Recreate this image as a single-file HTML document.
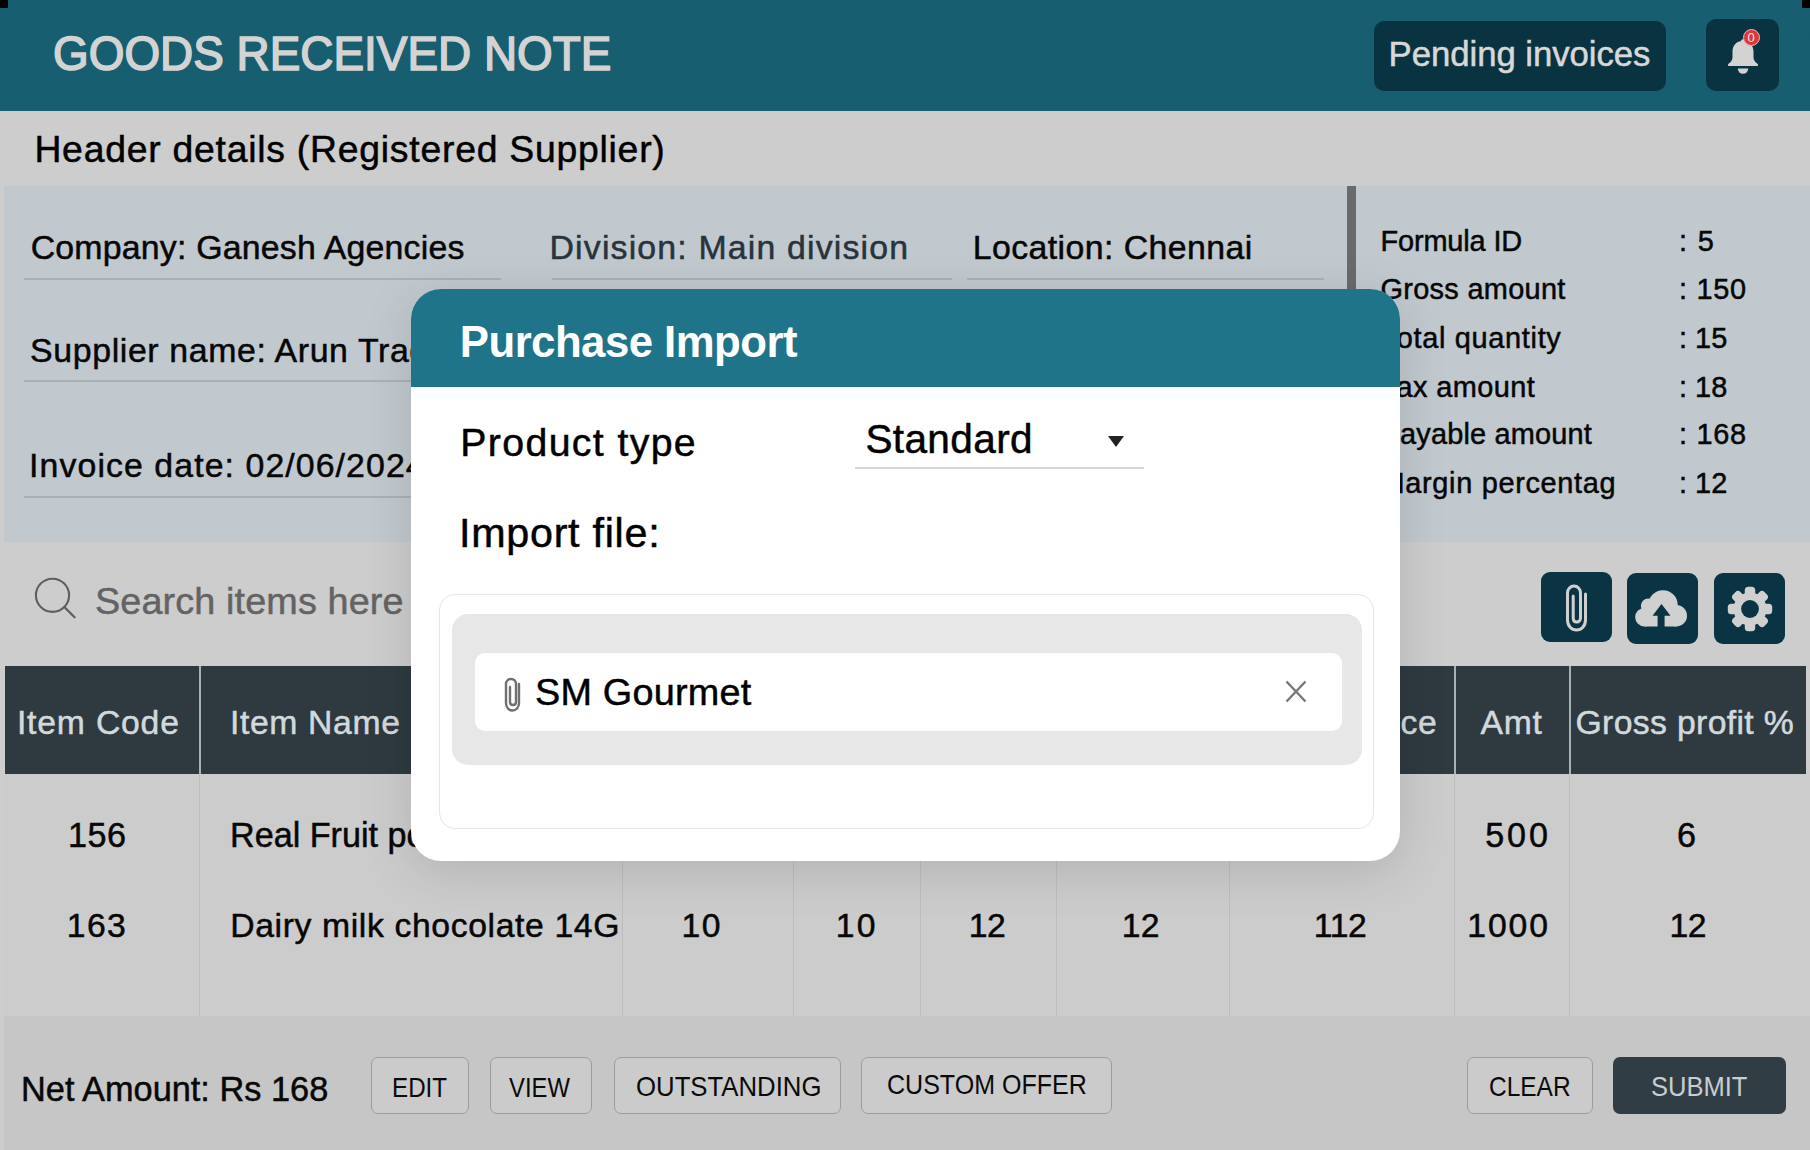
<!DOCTYPE html>
<html><head><meta charset="utf-8">
<style>
*{margin:0;padding:0;box-sizing:border-box}
html,body{width:1810px;height:1150px;overflow:hidden;background:#cdcdcd;font-family:"Liberation Sans",sans-serif}
.a{position:absolute}
.t{position:absolute;white-space:nowrap;line-height:1}
svg{position:absolute;overflow:visible}
</style></head><body>
<!-- top bar -->
<div class="a" style="left:0;top:0;width:1810px;height:111px;background:#175e70"></div>
<div class="a" style="left:0;top:0;width:8px;height:8px;background:#000"></div>
<div class="a" style="left:1802px;top:0;width:8px;height:8px;background:#000"></div>
<div class="a" style="left:0;top:0;width:40px;height:40px;background:#175e70;border-top-left-radius:36px"></div>
<div class="a" style="left:1770px;top:0;width:40px;height:40px;background:#175e70;border-top-right-radius:36px"></div>
<div class="t" id="title" style="left:52.92px;top:29.40px;font-size:48.84px;letter-spacing:0.000px;-webkit-text-stroke:1.6px #d3d3d3;color:#d3d3d3;transform:scaleX(0.9397);transform-origin:0 0;">GOODS RECEIVED NOTE</div>
<div class="a" style="left:1374px;top:21px;width:292px;height:70px;background:#0a3342;border-radius:10px"></div>
<div class="t" id="pend" style="left:1388.60px;top:37.30px;font-size:34.74px;letter-spacing:-0.053px;-webkit-text-stroke:0.5px #d8d8d8;color:#d8d8d8;">Pending invoices</div>
<div class="a" style="left:1706px;top:19px;width:73px;height:72px;background:#0a3342;border-radius:10px"></div>
<svg style="left:1726px;top:38px" width="34" height="38" viewBox="0 0 34 38">
  <path d="M17 3 C 10 3 6.5 8 6.5 13.5 L 6.5 19.5 C 6.5 22.5 4.5 24.5 2.2 26 Q 1.2 28 3.5 28 L 30.5 28 Q 32.8 28 31.8 26 C 29.5 24.5 27.5 22.5 27.5 19.5 L 27.5 13.5 C 27.5 8 24 3 17 3 Z" fill="#d3d3d3"/>
  <path d="M11.8 30.5 A 5.2 5.2 0 0 0 22.2 30.5 Z" fill="#d3d3d3"/>
  <circle cx="17" cy="3.5" r="2.2" fill="#d3d3d3"/>
</svg>
<div class="a" style="left:1743px;top:29px;width:17px;height:17px;border-radius:50%;background:#d83a3a;border:1.5px solid #f1b5b5"></div>
<div class="t" style="left:1747.5px;top:31px;font-size:13px;color:#fbe3e3">0</div>

<!-- header details -->
<div class="t" id="hd" style="left:34.40px;top:130.60px;font-size:37.35px;letter-spacing:0.760px;-webkit-text-stroke:0.5px #000;color:#000;">Header details (Registered Supplier)</div>
<div class="a" style="left:4px;top:186px;width:1806px;height:356px;background:#c1c9cf"></div>
<div class="a" style="left:1347px;top:186px;width:9px;height:356px;background:#6a6a6c"></div>
<div class="t" id="comp" style="left:30.70px;top:231.30px;font-size:33.87px;letter-spacing:0.200px;-webkit-text-stroke:0.5px #070707;color:#070707;">Company: Ganesh Agencies</div>
<div class="a" style="left:24px;top:278px;width:477px;height:2px;background:#a9b1b7"></div>
<div class="t" id="div" style="left:549.50px;top:231.30px;font-size:33.87px;letter-spacing:1.159px;-webkit-text-stroke:0.5px #28343b;color:#28343b;">Division: Main division</div>
<div class="a" style="left:552px;top:278px;width:400px;height:2px;background:#a9b1b7"></div>
<div class="t" id="loc" style="left:972.70px;top:231.30px;font-size:33.87px;letter-spacing:0.419px;-webkit-text-stroke:0.5px #070707;color:#070707;">Location: Chennai</div>
<div class="a" style="left:967px;top:278px;width:357px;height:2px;background:#a9b1b7"></div>
<div class="t" id="sup" style="left:30.10px;top:333.90px;font-size:33.87px;letter-spacing:0.614px;-webkit-text-stroke:0.5px #070707;color:#070707;">Supplier name: Arun Traders</div>
<div class="a" style="left:24px;top:380px;width:477px;height:2px;background:#a9b1b7"></div>
<div class="t" id="inv" style="left:29.10px;top:449.40px;font-size:33.87px;letter-spacing:1.073px;-webkit-text-stroke:0.5px #070707;color:#070707;">Invoice date: 02/06/2024</div>
<div class="a" style="left:24px;top:496px;width:477px;height:2px;background:#a9b1b7"></div>
<div class="t" id="f1" style="left:1380.50px;top:227.10px;font-size:28.92px;letter-spacing:-0.144px;-webkit-text-stroke:0.5px #070707;color:#070707;">Formula ID</div><div class="t" id="f2" style="left:1380.50px;top:275.00px;font-size:28.92px;letter-spacing:0.300px;-webkit-text-stroke:0.5px #070707;color:#070707;">Gross amount</div><div class="t" id="f3" style="left:1381.50px;top:323.90px;font-size:28.92px;letter-spacing:0.692px;-webkit-text-stroke:0.5px #070707;color:#070707;">Total quantity</div><div class="t" id="f4" style="left:1381.50px;top:372.50px;font-size:28.92px;letter-spacing:0.433px;-webkit-text-stroke:0.5px #070707;color:#070707;">Tax amount</div><div class="t" id="f5" style="left:1380.50px;top:420.40px;font-size:28.92px;letter-spacing:0.192px;-webkit-text-stroke:0.5px #070707;color:#070707;">Payable amount</div><div class="t" id="f6" style="left:1380.50px;top:469.30px;font-size:28.92px;letter-spacing:0.680px;-webkit-text-stroke:0.5px #070707;color:#070707;">Margin percentag</div>
<div class="t" id="v1" style="left:1679.00px;top:227.10px;font-size:28.92px;letter-spacing:1.400px;-webkit-text-stroke:0.5px #070707;color:#070707;">: 5</div><div class="t" id="v2" style="left:1679.00px;top:275.00px;font-size:28.92px;letter-spacing:0.725px;-webkit-text-stroke:0.5px #070707;color:#070707;">: 150</div><div class="t" id="v3" style="left:1679.00px;top:323.90px;font-size:28.92px;letter-spacing:0.000px;-webkit-text-stroke:0.5px #070707;color:#070707;">: 15</div><div class="t" id="v4" style="left:1679.00px;top:372.50px;font-size:28.92px;letter-spacing:0.000px;-webkit-text-stroke:0.5px #070707;color:#070707;">: 18</div><div class="t" id="v5" style="left:1679.00px;top:420.40px;font-size:28.92px;letter-spacing:0.725px;-webkit-text-stroke:0.5px #070707;color:#070707;">: 168</div><div class="t" id="v6" style="left:1679.00px;top:469.30px;font-size:28.92px;letter-spacing:0.000px;-webkit-text-stroke:0.5px #070707;color:#070707;">: 12</div>

<!-- search -->
<svg style="left:34px;top:577px" width="42" height="42" viewBox="0 0 42 42">
  <circle cx="18.5" cy="18.3" r="16.6" fill="none" stroke="#5f5f5f" stroke-width="2.1"/>
  <line x1="30.6" y1="30.3" x2="40.6" y2="40.3" stroke="#5f5f5f" stroke-width="2.3" stroke-linecap="round"/>
</svg>
<div class="t" id="srch" style="left:95.00px;top:583.00px;font-size:37.79px;letter-spacing:0.125px;-webkit-text-stroke:0.5px #636363;color:#636363;">Search items here</div>
<div class="a" style="left:1541px;top:572px;width:71px;height:70px;background:#0a3444;border-radius:9px"></div>
<div class="a" style="left:1627px;top:573px;width:71px;height:71px;background:#0a3444;border-radius:9px"></div>
<div class="a" style="left:1714px;top:573px;width:71px;height:71px;background:#0a3444;border-radius:9px"></div>
<!-- paperclip -->
<svg style="left:1564px;top:584px" width="26" height="50" viewBox="0 0 26 50">
  <path d="M21.5 10 L 21.5 36 C 21.5 42 17.5 46 12.5 46 C 7.5 46 3.5 42 3.5 36 L 3.5 9 C 3.5 5 6.5 2 10 2 C 13.5 2 16.5 5 16.5 9 L 16.5 34 C 16.5 36.5 14.8 38 12.8 38 C 10.8 38 9.2 36.5 9.2 34 L 9.2 12" fill="none" stroke="#d0d0d0" stroke-width="3" stroke-linecap="round"/>
</svg>
<!-- cloud upload -->
<svg style="left:1630px;top:585px" width="60" height="45" viewBox="0 0 60 45">
  <g fill="#d0d0d0">
    <circle cx="14.5" cy="32.2" r="9.3"/>
    <circle cx="18.3" cy="21" r="7.5"/>
    <circle cx="33" cy="19.9" r="14.7"/>
    <circle cx="46.2" cy="30.7" r="10.8"/>
    <rect x="14.5" y="24" width="31.7" height="17.5"/>
  </g>
  <path d="M31.5 19 L 40.5 30.7 L 34.6 30.7 L 34.6 42.5 L 27.6 42.5 L 27.6 30.7 L 22.5 30.7 Z" fill="#0a3444"/>
</svg>
<!-- gear -->
<svg style="left:1727px;top:586px" width="46" height="46" viewBox="-23 -23 46 46">
  <g fill="#d0d0d0"><circle r="16.5"/><rect x="-5.2" y="-22.2" width="10.4" height="11" rx="3.5" transform="rotate(0)"/><rect x="-5.2" y="-22.2" width="10.4" height="11" rx="3.5" transform="rotate(45)"/><rect x="-5.2" y="-22.2" width="10.4" height="11" rx="3.5" transform="rotate(90)"/><rect x="-5.2" y="-22.2" width="10.4" height="11" rx="3.5" transform="rotate(135)"/><rect x="-5.2" y="-22.2" width="10.4" height="11" rx="3.5" transform="rotate(180)"/><rect x="-5.2" y="-22.2" width="10.4" height="11" rx="3.5" transform="rotate(225)"/><rect x="-5.2" y="-22.2" width="10.4" height="11" rx="3.5" transform="rotate(270)"/><rect x="-5.2" y="-22.2" width="10.4" height="11" rx="3.5" transform="rotate(315)"/></g>
  <circle r="8.9" fill="#0a3444"/>
</svg>

<!-- table -->
<div class="a" style="left:5px;top:666px;width:1801px;height:108px;background:#2e3940"></div>
<div class="a" style="left:5px;top:774px;width:1801px;height:242px;background:#cccccc"></div>
<div class="a" style="left:199px;top:666px;width:2px;height:108px;background:#a8b1b6"></div>
<div class="a" style="left:1454px;top:666px;width:2px;height:108px;background:#a8b1b6"></div>
<div class="a" style="left:1569px;top:666px;width:2px;height:108px;background:#a8b1b6"></div>
<div class="a" style="left:199px;top:774px;width:1px;height:242px;background:#bdbdbd"></div>
<div class="a" style="left:622px;top:774px;width:1px;height:242px;background:#bdbdbd"></div>
<div class="a" style="left:793px;top:774px;width:1px;height:242px;background:#bdbdbd"></div>
<div class="a" style="left:920px;top:774px;width:1px;height:242px;background:#bdbdbd"></div>
<div class="a" style="left:1056px;top:774px;width:1px;height:242px;background:#bdbdbd"></div>
<div class="a" style="left:1229px;top:774px;width:1px;height:242px;background:#bdbdbd"></div>
<div class="a" style="left:1454px;top:774px;width:1px;height:242px;background:#bdbdbd"></div>
<div class="a" style="left:1569px;top:774px;width:1px;height:242px;background:#bdbdbd"></div>
<div class="t" id="h1" style="left:16.90px;top:705.50px;font-size:33.72px;letter-spacing:0.812px;-webkit-text-stroke:0.5px #d2d9dd;color:#d2d9dd;">Item Code</div><div class="t" id="h2" style="left:230.00px;top:705.50px;font-size:33.72px;letter-spacing:0.625px;-webkit-text-stroke:0.5px #d2d9dd;color:#d2d9dd;">Item Name</div><div class="t" id="h3" style="left:1292.60px;top:705.50px;font-size:33.72px;letter-spacing:0.700px;-webkit-text-stroke:0.5px #d2d9dd;color:#d2d9dd;">Net Price</div><div class="t" id="h4" style="left:1480.50px;top:705.50px;font-size:33.72px;letter-spacing:0.750px;-webkit-text-stroke:0.5px #d2d9dd;color:#d2d9dd;">Amt</div><div class="t" id="h5" style="left:1575.50px;top:705.50px;font-size:33.72px;letter-spacing:0.362px;-webkit-text-stroke:0.5px #d2d9dd;color:#d2d9dd;">Gross profit %</div>
<div class="t" id="r11" style="left:68.00px;top:818.00px;font-size:34.16px;letter-spacing:0.500px;-webkit-text-stroke:0.5px #070707;color:#070707;">156</div><div class="t" id="r12" style="left:230.00px;top:818.00px;font-size:34.16px;letter-spacing:0.000px;-webkit-text-stroke:0.5px #070707;color:#070707;">Real Fruit power</div><div class="t" id="r18" style="left:1485.30px;top:818.00px;font-size:34.16px;letter-spacing:2.800px;-webkit-text-stroke:0.5px #070707;color:#070707;">500</div><div class="t" id="r19" style="left:1677.00px;top:818.00px;font-size:34.16px;letter-spacing:0.000px;-webkit-text-stroke:0.5px #070707;color:#070707;">6</div>
<div class="t" id="r21" style="left:66.80px;top:909.20px;font-size:33.72px;letter-spacing:1.350px;-webkit-text-stroke:0.5px #070707;color:#070707;">163</div><div class="t" id="r22" style="left:230.20px;top:909.20px;font-size:33.72px;letter-spacing:0.630px;-webkit-text-stroke:0.5px #070707;color:#070707;">Dairy milk chocolate 14G</div><div class="t" id="r23" style="left:681.40px;top:909.20px;font-size:33.72px;letter-spacing:1.500px;-webkit-text-stroke:0.5px #070707;color:#070707;">10</div><div class="t" id="r24" style="left:835.70px;top:909.20px;font-size:33.72px;letter-spacing:2.300px;-webkit-text-stroke:0.5px #070707;color:#070707;">10</div><div class="t" id="r25" style="left:968.80px;top:909.20px;font-size:33.72px;letter-spacing:-0.500px;-webkit-text-stroke:0.5px #070707;color:#070707;">12</div><div class="t" id="r26" style="left:1121.70px;top:909.20px;font-size:33.72px;letter-spacing:0.300px;-webkit-text-stroke:0.5px #070707;color:#070707;">12</div><div class="t" id="r27" style="left:1313.80px;top:909.20px;font-size:33.72px;letter-spacing:-0.400px;-webkit-text-stroke:0.5px #070707;color:#070707;">112</div><div class="t" id="r28" style="left:1467.30px;top:909.20px;font-size:33.72px;letter-spacing:1.900px;-webkit-text-stroke:0.5px #070707;color:#070707;">1000</div><div class="t" id="r29" style="left:1669.40px;top:909.20px;font-size:33.72px;letter-spacing:-0.400px;-webkit-text-stroke:0.5px #070707;color:#070707;">12</div>

<!-- footer -->
<div class="a" style="left:4px;top:1016px;width:1806px;height:134px;background:#c6c6c6"></div>
<div class="t" id="net" style="left:21.13px;top:1072.00px;font-size:35.9px;letter-spacing:0.000px;-webkit-text-stroke:0.5px #080808;color:#080808;transform:scaleX(0.9565);transform-origin:0 0;">Net Amount: Rs 168</div>
<div class="a" style="left:371px;top:1057px;width:98px;height:57px;border:1.5px solid #9c9c9c;border-radius:7px;background:#cbcbcb"></div>
<div class="a" style="left:490px;top:1057px;width:102px;height:57px;border:1.5px solid #9c9c9c;border-radius:7px;background:#cbcbcb"></div>
<div class="a" style="left:614px;top:1057px;width:227px;height:57px;border:1.5px solid #9c9c9c;border-radius:7px;background:#cbcbcb"></div>
<div class="a" style="left:861px;top:1057px;width:251px;height:57px;border:1.5px solid #9c9c9c;border-radius:7px;background:#cbcbcb"></div>
<div class="a" style="left:1467px;top:1057px;width:126px;height:57px;border:1.5px solid #9c9c9c;border-radius:7px;background:#cbcbcb"></div>
<div class="a" style="left:1613px;top:1057px;width:173px;height:57px;border-radius:7px;background:#313d45"></div>
<div class="t" id="b1" style="left:391.53px;top:1073.70px;font-size:27.33px;letter-spacing:0.000px;color:#0a0a0a;transform:scaleX(0.8850);transform-origin:0 0;">EDIT</div><div class="t" id="b2" style="left:509.40px;top:1074.40px;font-size:27.33px;letter-spacing:0.000px;color:#0a0a0a;transform:scaleX(0.8714);transform-origin:0 0;">VIEW</div><div class="t" id="b3" style="left:635.84px;top:1073.80px;font-size:26.74px;letter-spacing:0.000px;color:#0a0a0a;transform:scaleX(0.9632);transform-origin:0 0;">OUTSTANDING</div><div class="t" id="b4" style="left:887.17px;top:1071.50px;font-size:27.03px;letter-spacing:0.000px;color:#0a0a0a;transform:scaleX(0.9268);transform-origin:0 0;">CUSTOM OFFER</div><div class="t" id="b5" style="left:1489.40px;top:1072.50px;font-size:27.33px;letter-spacing:0.000px;color:#0a0a0a;transform:scaleX(0.8955);transform-origin:0 0;">CLEAR</div><div class="t" id="b6" style="left:1650.61px;top:1072.30px;font-size:28.49px;letter-spacing:0.000px;color:#c9cdd0;transform:scaleX(0.8962);transform-origin:0 0;">SUBMIT</div>

<!-- modal -->
<div class="a" style="left:411px;top:289px;width:989px;height:572px;background:#fff;border-radius:30px;overflow:hidden;box-shadow:0 10px 50px rgba(0,0,0,0.13)">
  <div class="a" style="left:0;top:0;width:989px;height:98px;background:#1f748a"></div>
</div>
<div class="t" id="mt" style="left:459.80px;top:320.30px;font-size:43.75px;letter-spacing:-0.536px;font-weight:bold;color:#ffffff;">Purchase Import</div>
<div class="t" id="pt" style="left:460.30px;top:422.90px;font-size:39.24px;letter-spacing:1.373px;-webkit-text-stroke:0.5px #000;color:#000;">Product type</div>
<div class="t" id="std" style="left:865.40px;top:418.80px;font-size:40.55px;letter-spacing:0.371px;-webkit-text-stroke:0.5px #000;color:#000;">Standard</div>
<svg style="left:1108px;top:436px" width="16" height="11" viewBox="0 0 16 11"><path d="M0 0 L16 0 L8 11 Z" fill="#222"/></svg>
<div class="a" style="left:855px;top:467px;width:289px;height:2px;background:#d6d6d6"></div>
<div class="t" id="imf" style="left:459.00px;top:513.00px;font-size:41.28px;letter-spacing:0.727px;-webkit-text-stroke:0.5px #000;color:#000;">Import file:</div>
<div class="a" style="left:439px;top:594px;width:935px;height:235px;border:1.5px solid #e6e6e6;border-radius:16px;background:#fff"></div>
<div class="a" style="left:452px;top:614px;width:910px;height:151px;border-radius:16px;background:#e7e7e7"></div>
<div class="a" style="left:475px;top:653px;width:867px;height:78px;border-radius:10px;background:#fff"></div>
<svg style="left:502px;top:677px" width="22" height="36" viewBox="0 0 22 36">
  <path d="M17 7 L 17 26 C 17 30.5 14 33.5 10.5 33.5 C 7 33.5 4 30.5 4 26 L 4 7 C 4 4 6.3 2 9 2 C 11.7 2 14 4 14 7 L 14 25 C 14 27 12.5 28 11 28 C 9.5 28 8 27 8 25 L 8 10" fill="none" stroke="#6f6f6f" stroke-width="2.4" stroke-linecap="round"/>
</svg>
<div class="t" id="smg" style="left:535.00px;top:674.00px;font-size:37.79px;letter-spacing:0.222px;-webkit-text-stroke:0.5px #000;color:#000;">SM Gourmet</div>
<svg style="left:1285px;top:680px" width="22" height="23" viewBox="0 0 22 23">
  <path d="M1.5 1.5 L20.5 21.5 M20.5 1.5 L1.5 21.5" stroke="#777" stroke-width="2.4"/>
</svg>
</body></html>
